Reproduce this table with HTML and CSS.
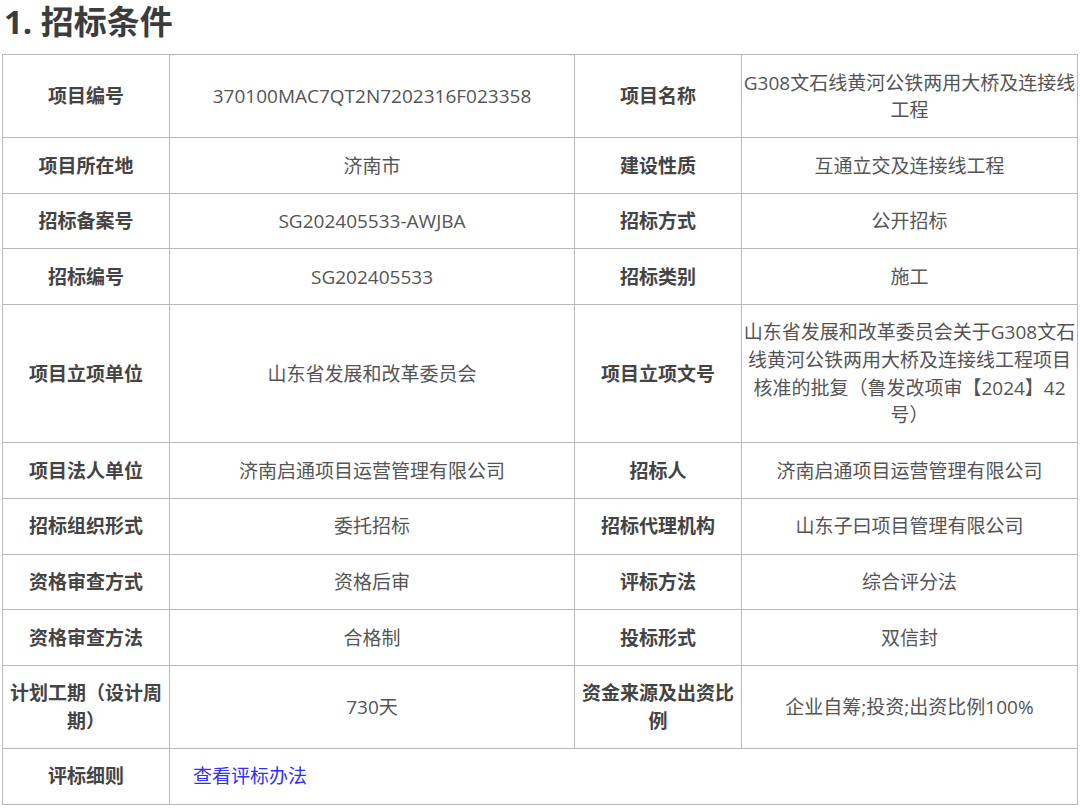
FILE: index.html
```html
<!DOCTYPE html>
<html lang="zh-CN">
<head>
<meta charset="utf-8">
<title>招标条件</title>
<link rel="stylesheet" href="styles.css">
</head>
<body>
<h1 class="title">1. 招标条件</h1>
<table class="info">
  <colgroup>
    <col class="c-label">
    <col class="c-value">
    <col class="c-label">
    <col class="c-value2">
  </colgroup>
  <tbody>
    <tr>
      <th>项目编号</th><td>370100MAC7QT2N7202316F023358</td>
      <th>项目名称</th><td>G308文石线黄河公铁两用大桥及连接线工程</td>
    </tr>
    <tr>
      <th>项目所在地</th><td>济南市</td>
      <th>建设性质</th><td>互通立交及连接线工程</td>
    </tr>
    <tr>
      <th>招标备案号</th><td>SG202405533-AWJBA</td>
      <th>招标方式</th><td>公开招标</td>
    </tr>
    <tr>
      <th>招标编号</th><td>SG202405533</td>
      <th>招标类别</th><td>施工</td>
    </tr>
    <tr>
      <th>项目立项单位</th><td>山东省发展和改革委员会</td>
      <th>项目立项文号</th><td>山东省发展和改革委员会关于G308文石线黄河公铁两用大桥及连接线工程项目核准的批复（鲁发改项审【2024】42号）</td>
    </tr>
    <tr>
      <th>项目法人单位</th><td>济南启通项目运营管理有限公司</td>
      <th>招标人</th><td>济南启通项目运营管理有限公司</td>
    </tr>
    <tr>
      <th>招标组织形式</th><td>委托招标</td>
      <th>招标代理机构</th><td>山东子曰项目管理有限公司</td>
    </tr>
    <tr>
      <th>资格审查方式</th><td>资格后审</td>
      <th>评标方法</th><td>综合评分法</td>
    </tr>
    <tr>
      <th>资格审查方法</th><td>合格制</td>
      <th>投标形式</th><td>双信封</td>
    </tr>
    <tr>
      <th>计划工期（设计周期）</th><td>730天</td>
      <th>资金来源及出资比例</th><td>企业自筹;投资;出资比例100%</td>
    </tr>
    <tr>
      <th>评标细则</th><td colspan="3" class="link-cell"><a href="#" class="link">查看评标办法</a></td>
    </tr>
  </tbody>
</table>
</body>
</html>
```

FILE: styles.css
```css
html, body {
  margin: 0;
  padding: 0;
  background: #ffffff;
}

body {
  font-family: "Open Sans", "Noto Sans CJK SC", sans-serif;
  color: #555555;
  width: 1080px;
}

.title {
  margin: 0 0 10px 0;
  padding: 0 0 0 4px;
  font-size: 33px;
  line-height: 44px;
  font-weight: 700;
  color: #3c3c3c;
}

.info {
  margin-left: 2px;
  width: 1076px;
  table-layout: fixed;
  border-collapse: collapse;
  font-size: 19px;
  line-height: 27.6px;
}

.c-label { width: 167px; }
.c-value { width: 405px; }
.c-value2 { width: 336px; }

.info th,
.info td {
  border: 1px solid #b8b8b8;
  padding: 14.5px 1px 12.5px;
  text-align: center;
  vertical-align: middle;
}

.info th {
  font-weight: 700;
  color: #444444;
}

.info td {
  font-weight: 400;
  color: #555555;
}

.info td.link-cell {
  text-align: left;
  padding-left: 23px;
}

.link {
  color: #2f2fff;
  text-decoration: none;
}
```
